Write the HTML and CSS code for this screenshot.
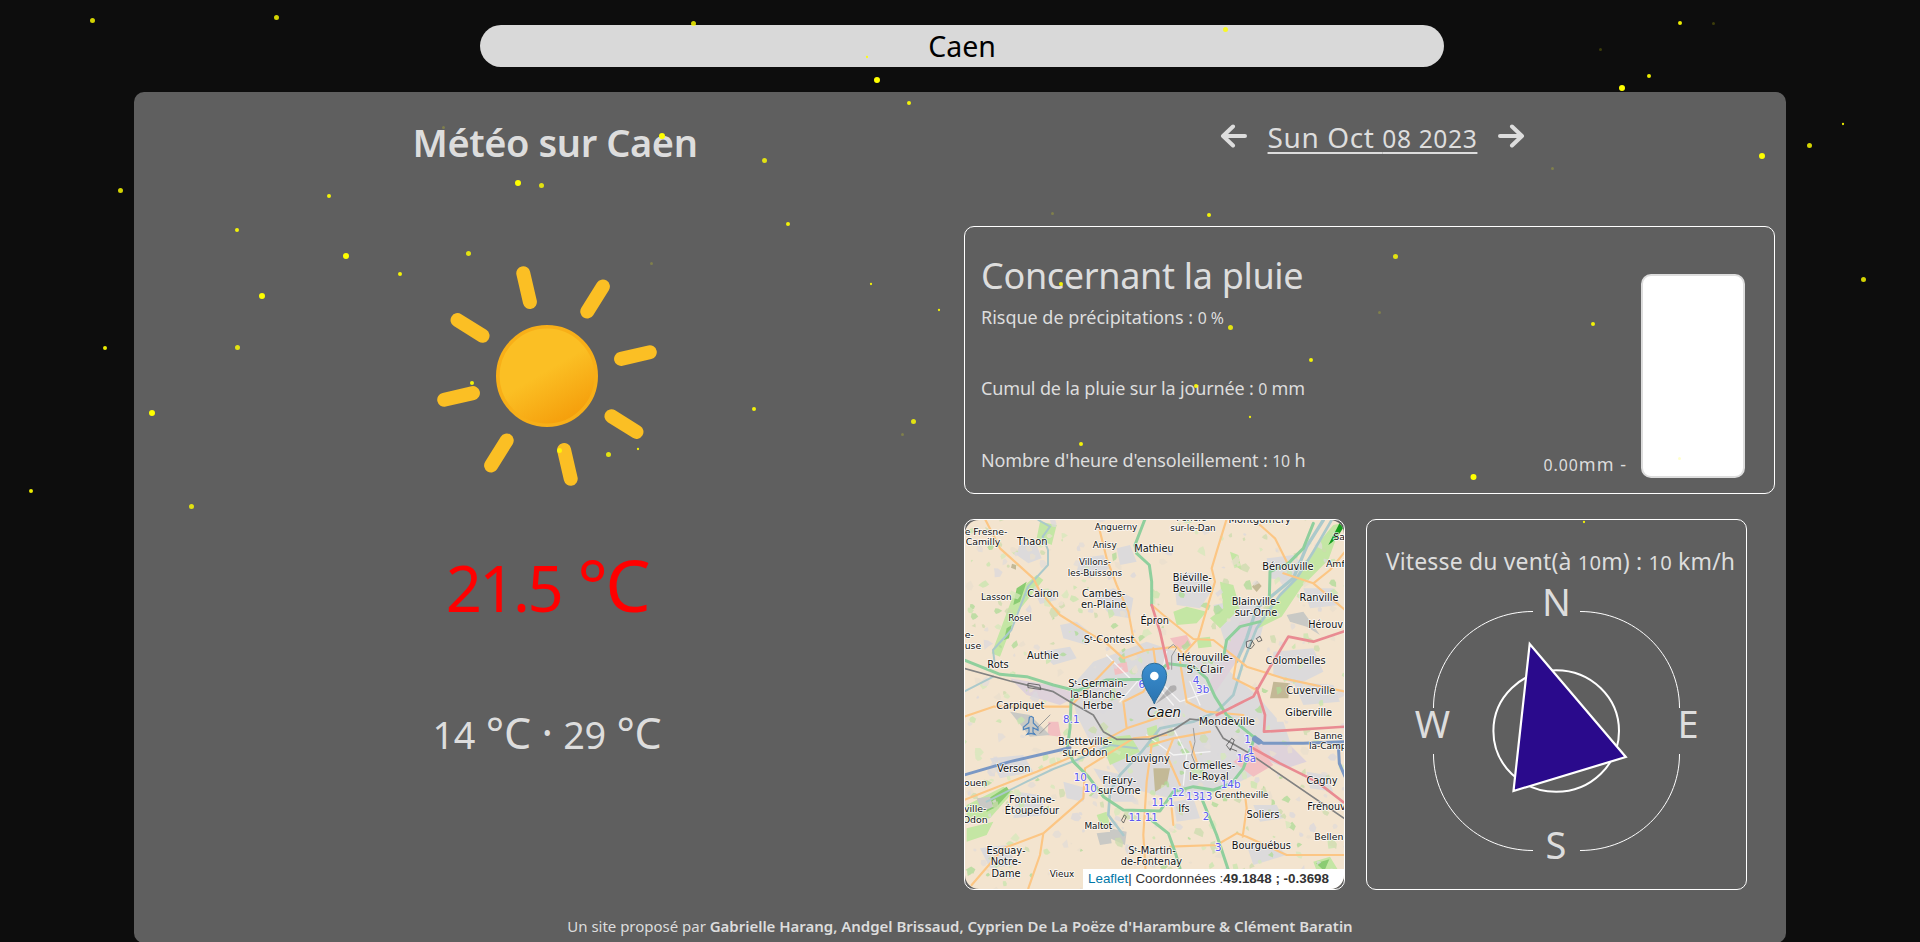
FILE: index.html
```html
<!DOCTYPE html>
<html lang="fr">
<head>
<meta charset="utf-8">
<title>Météo sur Caen</title>
<link rel="stylesheet" href="styles.css">
</head>
<body>
<header class="search"><span>Caen</span></header>
<main class="panel">
  <div class="columns">
    <section class="today">
      <h1 class="today-title">Météo sur Caen</h1>
      <svg class="sun" viewBox="-120 -120 240 240">
        <defs>
          <linearGradient id="sunFill" x1="-25" y1="-43" x2="25" y2="43" gradientUnits="userSpaceOnUse">
            <stop offset="0" stop-color="#fbbf24"/><stop offset=".45" stop-color="#fbbf24"/><stop offset="1" stop-color="#f59e0b"/>
          </linearGradient>
        </defs>
        <circle r="49.2" fill="url(#sunFill)" stroke="#f8af18" stroke-width="3.6"/>
        <g transform="rotate(-13)" stroke="#fbbf24" stroke-width="14" stroke-linecap="round">
          <path d="M0-76V-105.5M0 76V105.5M-76 0H-105.5M76 0H105.5"/>
          <path transform="rotate(45)" d="M0-76V-105.5M0 76V105.5M-76 0H-105.5M76 0H105.5"/>
        </g>
      </svg>
      <p class="temp"><span class="n">21.5</span> °C</p>
      <p class="range"><span class="n">14</span> °C · <span class="n">29</span> °C</p>
    </section>
    <section class="details">
      <nav class="day">
        <svg class="arrow" viewBox="0 0 27 24"><path d="M13 2.5L3 12l10 9.500M3 12H25"/></svg>
        <span class="date">Sun Oct <span class="n">08 2023</span></span>
        <svg class="arrow" viewBox="0 0 27 24"><path d="M14 2.500L24 12l-10 9.500M24 12H2"/></svg>
      </nav>
      <article class="card rain">
        <div class="rain-text">
          <h2 class="rain-title">Concernant la pluie</h2>
          <p class="line l1">Risque de précipitations : <span class="n">0 %</span></p>
          <p class="line l2">Cumul de la pluie sur la journée : <span class="n">0</span> mm</p>
          <p class="line l3">Nombre d'heure d'ensoleillement : <span class="n">10</span> h</p>
        </div>
        <div class="gauge-wrap">
          <span class="gauge-label"><span class="n">0.00</span>mm -</span>
          <div class="gauge"></div>
        </div>
      </article>
      <div class="pair">
        <div class="card map">
          <svg class="tiles" viewBox="1 1 379 369">
            <g transform="translate(-4 -4) scale(.33333)">
              <rect width="1170" height="1140" fill="#f3e4cf"/>
              <g fill="#dcdadb">
                <path d="M180 80l50 10 15 40-40 15-35-25zM360 130l70-10 20 40-60 30-40-20zM220 220l60 5 10 30-50 12zM300 330l50-10 50 40-20 30-70-20zM400 240l60-20 60 30-10 60-60-10zM470 100l40-10 20 50-50 10zM240 410l90-15 20 35-70 20z"/>
                <path d="M400 440l80-30 80-30 90 30 120 20 60 60 60 50 60 70 10 100-60 60-120 60-150 20-120-30-60-80-60-60-40-80-20-80z"/>
                <path d="M640 180l80-10 40 50-40 60-70-10zM760 270l100-20 60 40-20 80-100 30zM920 130l80-10 50 50-60 30-60-10zM1030 220l90 0 20 50-90 10zM940 410l120-10 30 70-80 40-70-30zM1000 500l120 10 20 50-110 10z"/>
                <path d="M90 730l100-10 30 50-100 20zM170 830l70 10 20 60-100 10zM310 800l70 20-10 40-50-10zM400 760l90 20 40 80-70 0zM820 620l150 0 20 60-100 20zM860 990l80-10 40 40-100 30zM880 870l70 0 20 40-70 10zM640 860l60-10 20 60-70 10zM1040 770l60 10 20 50-70-10zM60 1000l80-10 30 60-80 10z"/>
              </g>
              <g fill="#ded2da"><path d="M150 490l120 20 90 30-60 30-100-30zM840 320l70-20-60 110-90 130-20-20zM880 680l100 0 60 60-60 20-100-40z"/></g>
              <g fill="#f2bfc1"><path d="M820 740l70-50 50 60-60 35zM630 370l50-10 15 30-40 15zM265 620l30 0 8 45-40-4zM460 450l40-10 5 30-40 10z"/></g>
              <g fill="#c4e6a4">
                <path d="M1070 90l50-60 25-5-40 110-80 80-60 90-80 40 30-60 80-80z"/>
                <path d="M240 20l50 10-15 60-45-20zM160 240l70-60 20 15-80 100-50 130-25-10zM810 110l25 10 10 45-25-15zM780 200l40 10 20 70-60 60-30-30 40-30zM640 290l40-15 60 15-30 35-60 5zM710 370l40-5 5 30-40 5z"/>
                <path d="M20 870l110-55 30 15-70 80-70 10zM420 670l90-10 30 50-90 40zM410 900l30-10 10 40-25 10zM1060 1040l50-15 30 50-60 20zM20 940l80-20-20 40-60 20zM560 640l30-10 10 60-30 10z"/>
              </g>
              <path fill="#8bcc73" d="M70 860l70-45 10 15-40 45-30 15zM170 220l30-20-20 60-20 10zM140 340l15-10-8 40-15 5zM1068 1045l40-12-15 35z"/>
              <path fill="#169b1e" d="M1105 90l35-68 15 8-25 40-14 12z"/>
              <path fill="#c3b996" d="M876 215l15-18 14 16-15 18zM940 500l50 5-5 45-55 0zM580 760l50 0-10 50-35 20zM153 158l3-12 12 4v14z"/>
              <path fill="#c9c9c5" d="M50 850l40-5 10 30-35 15zM980 300l50-10 50 70-40-25-50-15zM150 590l60 10 60 60-60 5zM410 955l40-5 5 35-35 5zM450 940l50 10-5 40-45-20z"/>
              <g id="patches" opacity=".75"></g>
              <g fill="none" stroke-linejoin="round" stroke-linecap="round">
                <g stroke="#abc9cb" stroke-width="8">
                  <path d="M1115 15L1060 110 1010 190 960 240 890 340 850 440 820 540 770 590 700 620 600 640 545 710 480 780 450 830 445 900 490 960"/>
                  <path stroke-width="10" d="M1090 15L1040 95 1000 190 890 280 860 370 830 440"/>
                  <path stroke-width="6" d="M235 15l35 20-22 30 16 40 0 45-60 65-50 130-55 60 5 40M12 530L100 485M80 860L200 800 280 762 350 735 450 690 530 700"/>
                </g>
                <g stroke="#fff" stroke-width="4" opacity=".7"><path d="M440 420l70 70 80 20 50 60M620 410l-20 90 60 60 90-30M480 560l60-70M560 660l80 60 110-10M640 640l40 80-10 90M690 500l30 70"/></g>
                <g stroke="#fcc684" stroke-width="6.500">
                  <path d="M75 12L120 100 220 190 240 230 300 300 380 350 440 385 490 430 560 405 650 395 690 440M415 30L440 130 470 210 505 290 520 370 550 405M800 12L770 110 755 160 765 200 735 300 715 370 660 430M575 270L610 300 700 372 760 375 830 430 860 455 970 490 1155 530M900 30L945 70 985 150M830 430L820 490 890 525M970 175L1060 205 1110 165 1155 110M1060 205L1155 285"/>
                  <path d="M12 855L230 770 360 715 500 640 620 600M35 1110L130 1000 250 955 370 850 375 760 520 670 620 660M250 955L240 1020 205 1120M12 605L100 575 330 575 460 440M570 690L640 670 750 650M630 995L770 990 830 955 860 965 980 1020 1155 1020M855 840L860 880 848 965M635 880L640 930M575 690L560 800 550 960 560 1120M580 400L590 470 550 530 490 560 500 640M660 440L680 560 740 590 850 600M640 670L620 720 660 810M690 680L710 740"/>
                </g>
                <g stroke="#8fcf9d" stroke-width="9">
                  <path d="M12 435L120 478 200 485 280 510 350 528 440 495 560 493 625 446 700 455 740 490 765 545 800 600 880 665M350 525L333 560 330 640 322 700 340 740 385 785 430 845 490 885 600 888 640 830 700 815 760 825 815 805 850 760 885 665M555 12L525 90 530 115 568 150 575 200 575 270M1060 25L1030 100 985 145 930 170 928 250M900 320L840 335 800 375 790 430M725 850L770 960 805 1065M570 912L625 955 645 1010 660 1060"/>
                </g>
                <g stroke="#7b98c4" stroke-width="9"><path d="M12 780L150 740 330 698M885 670L910 685 1030 685 1155 680M1135 690L1138 745 1155 785"/></g>
                <path stroke="#7b98c4" stroke-width="18" d="M885 672l12 8"/>
                <g stroke="#e98b92" stroke-width="8"><path d="M575 270L600 350 625 460M825 572L880 545 925 465 985 365 1060 380 1155 348M890 520L915 600 912 650 1155 635M870 695L960 745 1070 800 1155 865M770 600L850 560"/></g>
                <path stroke="#828282" stroke-width="5" d="M12 460L150 498 280 530 330 560 400 600 430 650 470 673 570 672 640 645 690 612 760 620 790 670 860 710 1155 912"/>
                <g stroke="#9a9a9a" stroke-width="3"><path d="M625 400l15-12 10 10-15 25 0 40M700 640l5 40-10 40 12 30M230 640l40-40M240 655l30-30"/></g>
                <g stroke="#555" stroke-width="2.500"><path d="M860 380l15-5 8 14-10 12-12-4zM890 370l10-6 6 12-10 4zM870 395l6-15M800 690l15-20 8 5-12 30zM810 700l20 8M205 505l34 5 4 14-38-6zM485 915l8-15 6 5-8 18z"/></g>
              </g>
              <path fill="none" stroke="#4e83bb" stroke-width="3.500" d="M208 607l6-3 6 4v16l14 14v8l-15-8v14l6 6-12-3-12 3 6-6v-14l-17 6v-7l16-14z"/>
              <g class="lbl" text-anchor="middle">
                <g font-size="26.500"><text x="468" y="44">Anguerny</text><text x="434" y="99">Anisy</text><text x="405" y="151">Villons-</text><text x="405" y="182">les-Buissons</text><text x="109" y="254">Lasson</text><text x="180" y="317">Rosel</text><text x="699" y="17">Périers-</text><text x="699" y="47">sur-le-Dan</text><text x="415" y="942">Maltot</text><text x="306" y="1086">Vieux</text><text x="845" y="848">Grentheville</text></g>
                <g font-size="29.500"><text x="217" y="91">Thaon</text><text x="582" y="112">Mathieu</text><text x="249" y="247">Cairon</text><text x="431" y="247">Cambes-</text><text x="431" y="279">en-Plaine</text><text x="584" y="326">Épron</text><text x="447" y="383">Sᵗ-Contest</text><text x="249" y="433">Authie</text><text x="114" y="458">Rots</text><text x="413" y="516">Sᵗ-Germain-</text><text x="413" y="550">la-Blanche-</text><text x="414" y="582">Herbe</text><text x="181" y="581">Carpiquet</text>
                <text x="899" y="24">Montgomery</text><text x="984" y="164">Bénouville</text><text x="697" y="198">Biéville-</text><text x="697" y="231">Beuville</text><text x="887" y="269">Blainville-</text><text x="888" y="303">sur-Orne</text><text x="1077" y="258">Ranville</text><text x="1007" y="447">Colombelles</text><text x="1052" y="537">Cuverville</text>
                <text x="375" y="690">Bretteville-</text><text x="375" y="722">sur-Odon</text><text x="563" y="741">Louvigny</text><text x="161" y="772">Verson</text><text x="478" y="806">Fleury-</text><text x="478" y="838">sur-Orne</text><text x="216" y="863">Fontaine-</text><text x="216" y="896">Étoupefour</text><text x="138" y="1017">Esquay-</text><text x="138" y="1051">Notre-</text><text x="138" y="1086">Dame</text><text x="576" y="1016">Sᵗ-Martin-</text><text x="574" y="1050">de-Fontenay</text>
                <text x="1046" y="602">Giberville</text><text x="747" y="761">Cormelles-</text><text x="747" y="794">le-Royal</text><text x="672" y="890">Ifs</text><text x="909" y="910">Soliers</text><text x="904" y="1002">Bourguébus</text><text x="1086" y="806">Cagny</text></g>
                <g font-size="31"><text x="735" y="437">Hérouville-</text><text x="735" y="473">Sᵗ-Clair</text><text x="801" y="630">Mondeville</text></g>
                <text x="612" y="607" font-size="40" font-style="italic">Caen</text>
              </g>
              <g class="lbl" font-size="28"><text x="14" y="60">e Fresne-</text><text x="17" y="91">Camilly</text><text x="14" y="368">e-</text><text x="14" y="403">use</text><text x="1120" y="75">Sa</text><text x="1098" y="155">Amf</text><text x="1045" y="338" font-size="29">Hérouv</text><text x="12" y="814">ouen</text><text x="12" y="892">ville-</text><text x="8" y="925">Odon</text><text x="1062" y="671" font-size="27">Banne</text><text x="1047" y="703" font-size="27">la-Camp</text><text x="1042" y="884" font-size="29">Frénouv</text><text x="1063" y="974">Bellen</text></g>
              <g class="lbl exit" font-size="31" text-anchor="middle"><text x="545" y="519">6</text><text x="708" y="507">4</text><text x="728" y="534">3b</text><text x="334" y="623">8.1</text><text x="361" y="798">10</text><text x="391" y="832">10</text><text x="525" y="917">11</text><text x="574" y="917">11</text><text x="863" y="684">1</text><text x="873" y="716">1</text><text x="859" y="742">16a</text><text x="812" y="820">14b</text><text x="654" y="843">12</text><text x="698" y="854">13</text><text x="737" y="854">13</text><text x="609" y="874">11.1</text><text x="738" y="915">2</text><text x="775" y="1008">3</text></g>
              <path d="M586 568l45-55q22-8 18 12z" fill="#000" opacity=".2"/>
              <g transform="translate(583 567) scale(3)">
                <path d="M0 0C-2-7-12.300-17-12.300-28.500A12.300 12.300 0 0 1 12.300-28.500C12.300-17 2-7 0 0z" fill="url(#pin)" stroke="#2e6c97"/>
                <circle cy="-28" r="4.300" fill="#fff"/>
              </g>
            </g>
            <defs><linearGradient id="pin" x2="0" y2="1"><stop offset="0" stop-color="#3b8fd0"/><stop offset="1" stop-color="#2a73b0"/></linearGradient></defs>
          </svg>
          <div class="attribution"><a>Leaflet</a>| Coordonnées :<b>49.1848 ; -0.3698</b></div>
        </div>
        <div class="card wind">
          <p class="wind-title">Vitesse du vent(à <span class="n">10</span>m) : <span class="n">10</span> km/h</p>
          <svg class="compass" viewBox="1367 576 379 313">
            <g fill="none" stroke="#fff">
              <path d="M1533 611.500C1478 611.500 1433.500 654 1433.500 708M1580 611.500C1635 611.500 1679.500 654 1679.500 708M1433.500 754C1433.500 808 1478 850.500 1533 850.500M1679.500 754C1679.500 808 1635 850.500 1580 850.500"/>
              <ellipse cx="1556.200" cy="731" rx="62.800" ry="60.800" stroke-width="2"/>
            </g>
            <path d="M1529.700 644L1625.800 757 1513.500 791z" fill="#2a0a8c" stroke="#fff" stroke-width="2.200"/>
            <g class="points" text-anchor="middle"><text x="1556.500" y="616">N</text><text x="1556" y="859">S</text><text x="1432.500" y="738">W</text><text x="1688" y="738">E</text></g>
          </svg>
        </div>
      </div>
    </section>
  </div>
  <footer class="credits">Un site proposé par <b>Gabrielle Harang, Andgel Brissaud, Cyprien De La Poëze d'Harambure &amp; Clément Baratin</b></footer>
</main>
<svg class="stars" viewBox="0 0 1920 942">
  <path stroke-width="6" d="M518 183h0M346 256h0M262 296h0M152 413h0M877 80h0M662 136h0M1622 88h0M1762 156h0M1473.500 477h0"/>
  <path stroke-width="5" opacity=".82" d="M92.500 20.500h0M276.500 17.500h0M120.500 190.500h0M541.500 185.500h0M468.500 253.500h0M237.500 347.500h0M559.500 450.500h0M608.500 454.500h0M693.500 23.500h0M1225.500 29.500h0M764.500 160.500h0M913.500 421.500h0M1230.500 327.500h0M1809.500 145.500h0M1863.500 279.500h0M1395.500 256.500h0M191.500 506.500h0"/>
  <path stroke-width="4" opacity=".92" d="M329 196h0M237 230h0M400 274h0M105 348h0M472 383h0M909 103h0M788 224h0M754 409h0M1209 215h0M1061 284h0M1196 386h0M1081 444h0M1680 23h0M1649 76h0M1593 324h0M1311 360h0M31 491h0"/>
  <path stroke-width="2.300" opacity=".9" d="M638 449h0M867 57h0M871 284h0M939 310h0M1250 417h0M1843 124h0M1584 522h0"/>
  <path stroke-width="3" opacity=".2" d="M443.500 127.500h0M651.500 263.500h0M902.500 434.500h0M1052.500 213.500h0M1713.500 23.500h0M1600.500 49.500h0M1552.500 168.500h0M1379.500 312.500h0M1679.500 458.500h0"/>
</svg>
<script src="map.js"></script>
</body>
</html>
```
FILE: styles.css
```css
* { box-sizing: border-box; margin: 0; padding: 0; }
body {
  position: relative;
  height: 942px;
  overflow: hidden;
  background: #0d0d0d;
  color: #ddd;
  font-family: "Noto Sans", "Open Sans", sans-serif;
}
.n { font-size: .88em; line-height: 0; }
.search {
  width: 964px;
  height: 42px;
  margin: 25px 0 0 480px;
  border-radius: 21px;
  background: #d9d9d9;
  color: #000;
  font-size: 28.5px;
  line-height: 42px;
  text-align: center;
}
.panel {
  width: 1652px;
  height: 851px;
  margin: 25px 0 0 134px;
  border-radius: 10px;
  background: #5f5f5f;
}
.columns { display: grid; grid-template-columns: 826px 811px; column-gap: 4px; }
.today { display: flex; flex-direction: column; align-items: center; padding-top: 25px; }
.today-title { padding-left: 16px; font-size: 38px; line-height: 50px; font-weight: 600; letter-spacing: -.42px; }
.sun { display: block; width: 240px; height: 240px; margin-top: 89px; }
.temp { margin-top: 48px; color: red; font-size: 72px; line-height: 80px; letter-spacing: -2.6px; }
.range { margin-top: 84px; font-size: 43px; line-height: 50px; letter-spacing: -.4px; }
.details { padding-top: 23px; }
.day { display: flex; justify-content: center; align-items: center; gap: 21px; height: 42px; padding-left: 6px; }
.arrow { width: 27px; height: 24px; fill: none; stroke: #ddd; stroke-width: 4; stroke-linecap: round; stroke-linejoin: round; }
.date { padding-top: 1px; font-size: 28px; line-height: 42px; letter-spacing: .6px; text-decoration: underline; text-decoration-thickness: 2px; text-underline-offset: 4px; }
.card { border: 1px solid #fff; border-radius: 10px; }
.rain { display: flex; justify-content: space-between; height: 268px; margin-top: 69px; padding: 27px 29px 15px 16px; }
.rain-title { font-size: 36px; line-height: 44px; font-weight: 400; letter-spacing: -.32px; }
.line { font-size: 18px; line-height: 24px; white-space: nowrap; letter-spacing: -.15px; }
.l1 { margin-top: 7px; letter-spacing: -.02px; }
.l2 { margin-top: 47px; }
.l3 { margin-top: 48px; }
.gauge-wrap { display: flex; align-items: flex-end; gap: 14px; }
.gauge-label { font-size: 18px; line-height: 24px; margin-bottom: 2px; letter-spacing: 1px; }
.gauge { width: 104px; height: 204px; border: 2px solid #ddd; border-radius: 10px; background: #fff; }
.pair { display: grid; grid-template-columns: 381px 381px; column-gap: 21px; margin-top: 25px; }
.map { position: relative; height: 371px; overflow: hidden; }
.tiles { display: block; width: 379px; height: 369px; border-radius: 14px; }
.lbl { font-family: "DejaVu Sans", sans-serif; fill: #111; stroke: #fff; stroke-width: 5px; stroke-opacity: .8; stroke-linejoin: round; paint-order: stroke; }
.exit { fill: #5a58f0; }
.attribution {
  position: absolute;
  right: 0;
  bottom: 0;
  width: 261px;
  height: 20px;
  padding-left: 5px;
  border-bottom-right-radius: 14px;
  background: #fff;
  color: #333;
  font: 13.4px/20px "Liberation Sans", Arial, sans-serif;
  white-space: nowrap;
}
.attribution a { color: #0078a8; }
.wind { height: 371px; padding-top: 26px; }
.wind-title { padding: 1px 0 0 8px; font-size: 23px; line-height: 29px; letter-spacing: .15px; text-align: center; white-space: nowrap; }
.compass { display: block; width: 379px; height: 313px; }
.points { fill: #ddd; font-size: 38px; }
.credits { margin-top: 24px; font-size: 15px; line-height: 24px; text-align: center; letter-spacing: -.02px; }
.credits b { font-weight: 600; }
.stars { position: absolute; left: 0; top: 0; width: 1920px; height: 942px; pointer-events: none; fill: none; stroke: #ff0; stroke-linecap: round; }
```
FILE: map.js
```js
// Scatter small land-use parcels (woods, meadows, buildings) over the map.
const layer = document.getElementById('patches');
const fills = ['#c9e6ae', '#d6e9bb', '#aedb97', '#dbd9dc', '#e2dcd8', '#eadfce', '#ccdcae'];
let seed = 17;
const rnd = () => (seed = (seed * 16807) % 2147483647) / 2147483647;
for (let i = 0; i < 520; i++) {
  const cx = rnd() * 1160, cy = rnd() * 1130, r = 4 + rnd() * 13;
  const pts = [];
  for (let a = 0; a < 6; a++) {
    const k = r * (0.4 + rnd() * 0.8);
    pts.push((cx + Math.cos(a) * k).toFixed(1) + ',' + (cy + Math.sin(a) * k).toFixed(1));
  }
  const p = document.createElementNS('http://www.w3.org/2000/svg', 'polygon');
  p.setAttribute('points', pts.join(' '));
  p.setAttribute('fill', fills[Math.floor(rnd() * fills.length)]);
  layer.appendChild(p);
}
```
